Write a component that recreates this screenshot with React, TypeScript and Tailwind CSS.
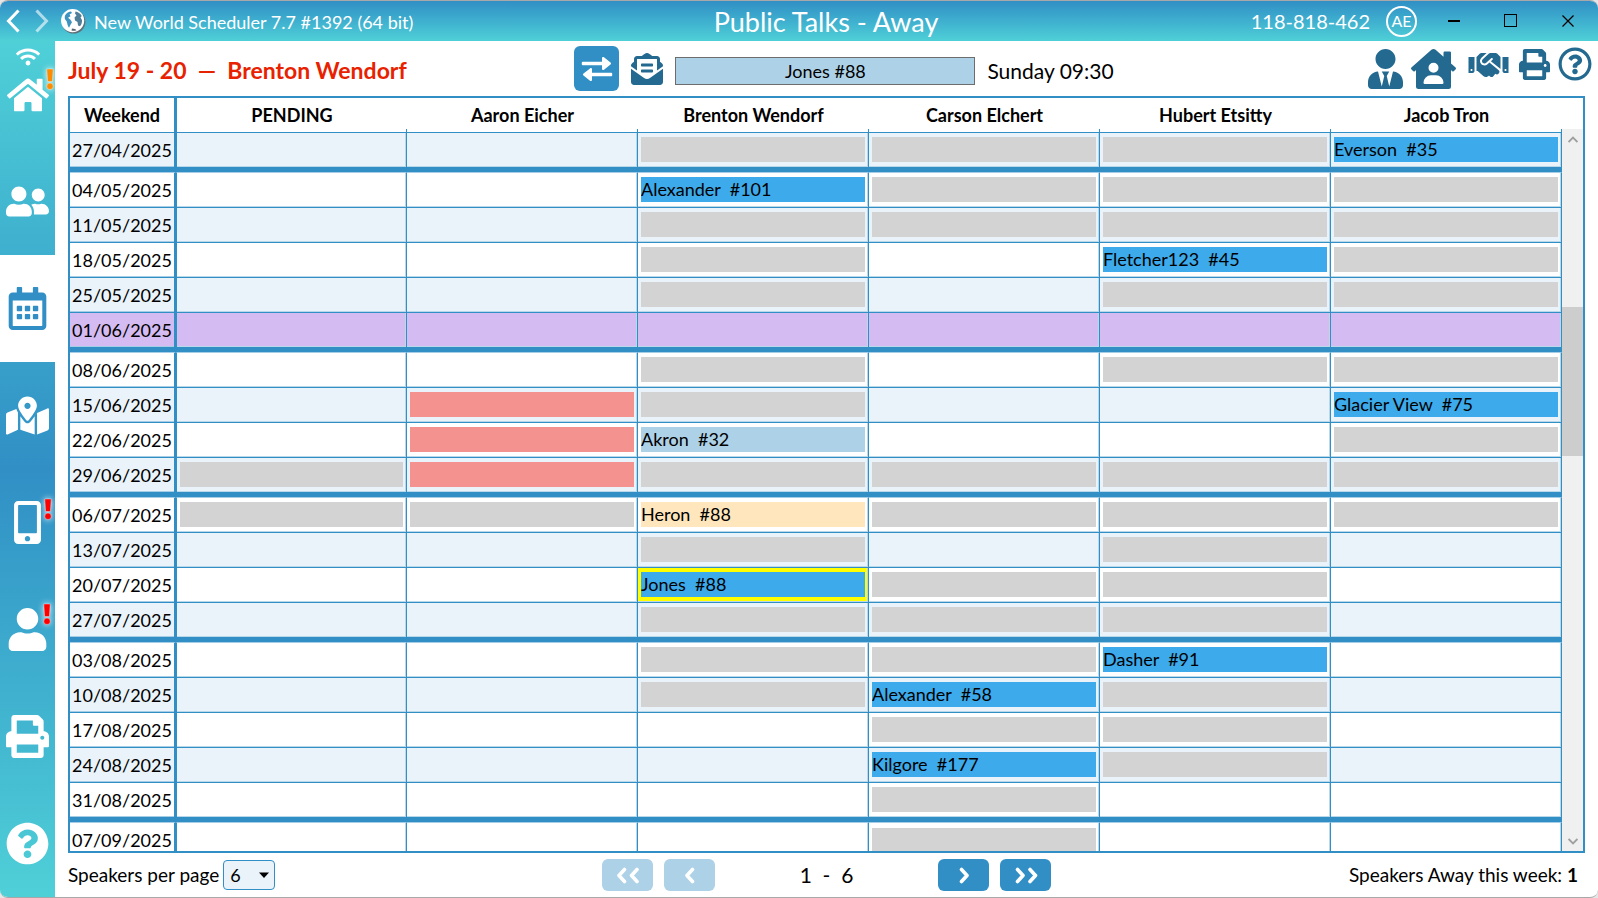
import { useState, type ReactNode } from "react";
import {
  FaEnvelopeOpenText,
  FaHandshake,
  FaHome,
  FaHouseUser,
  FaMapMarkedAlt,
  FaMobileAlt,
  FaPrint,
  FaQuestionCircle,
  FaRegCalendarAlt,
  FaRegQuestionCircle,
  FaUser,
  FaUserFriends,
  FaUserTie,
  FaWifi,
} from "react-icons/fa";

type Tone = "blocked" | "away" | "booked" | "light" | "tentative";
type Slot = null | { tone: Tone; label?: string; selected?: boolean };
type Week = { date: string; slots: Slot[]; special?: boolean };

const tones: Record<Tone, string> = {
  blocked: "bg-[#d3d3d3]",
  away: "bg-[#f3928f]",
  booked: "bg-[#3daaeb]",
  light: "bg-[#add1e7]",
  tentative: "bg-[#ffe6bd]",
};

const _ = null;
const g: Slot = { tone: "blocked" };
const r: Slot = { tone: "away" };
const talk = (label: string, tone: Tone = "booked", selected = false): Slot => ({ tone, label, selected });

const speakers = ["PENDING", "Aaron Eicher", "Brenton Wendorf", "Carson Elchert", "Hubert Etsitty", "Jacob Tron"];

/* Weeks grouped by month; `shade` tells whether the first week of the group is tinted. */
const months: { shade: boolean; weeks: Week[] }[] = [
  { shade: true, weeks: [{ date: "27/04/2025", slots: [_, _, g, g, g, talk("Everson  #35")] }] },
  {
    shade: false,
    weeks: [
      { date: "04/05/2025", slots: [_, _, talk("Alexander  #101"), g, g, g] },
      { date: "11/05/2025", slots: [_, _, g, g, g, g] },
      { date: "18/05/2025", slots: [_, _, g, _, talk("Fletcher123  #45"), g] },
      { date: "25/05/2025", slots: [_, _, g, _, g, g] },
      { date: "01/06/2025", slots: [_, _, _, _, _, _], special: true },
    ],
  },
  {
    shade: false,
    weeks: [
      { date: "08/06/2025", slots: [_, _, g, _, g, g] },
      { date: "15/06/2025", slots: [_, r, g, _, _, talk("Glacier View  #75")] },
      { date: "22/06/2025", slots: [_, r, talk("Akron  #32", "light"), _, _, g] },
      { date: "29/06/2025", slots: [g, r, g, g, g, g] },
    ],
  },
  {
    shade: false,
    weeks: [
      { date: "06/07/2025", slots: [g, g, talk("Heron  #88", "tentative"), g, g, g] },
      { date: "13/07/2025", slots: [_, _, g, _, g, _] },
      { date: "20/07/2025", slots: [_, _, talk("Jones  #88", "booked", true), g, g, _] },
      { date: "27/07/2025", slots: [_, _, g, g, g, _] },
    ],
  },
  {
    shade: false,
    weeks: [
      { date: "03/08/2025", slots: [_, _, g, g, talk("Dasher  #91"), _] },
      { date: "10/08/2025", slots: [_, _, g, talk("Alexander  #58"), g, _] },
      { date: "17/08/2025", slots: [_, _, _, g, g, _] },
      { date: "24/08/2025", slots: [_, _, _, talk("Kilgore  #177"), g, _] },
      { date: "31/08/2025", slots: [_, _, _, g, _, _] },
    ],
  },
  { shade: false, weeks: [{ date: "07/09/2025", slots: [_, _, _, g, _, _] }] },
];

function Globe() {
  return (
    <svg viewBox="0 0 26 26" className="size-[26px]" aria-hidden="true">
      <circle cx="13.6" cy="13.8" r="11.8" fill="#5f6f78" />
      <circle cx="12.6" cy="12.6" r="11.6" fill="#fff" />
      <path d="M5 7.500c1.500-2.500 4-4 6-4l1 1.500-2.500 1.500 1 1.800-2.500 1.500 2.500 2 1.500 2.500-1.500 2.500-1.500 3C7.500 18 7.500 15.500 6.500 13 4.500 11.500 4.500 9.500 5 7.500z" fill="#3f93bf" />
      <path d="M15.500 3.500c2.500.2 5 2 6.300 4.500l-1.300 1.500 1.500 2.500c.2 2.500-.5 4.500-2 6.300l-2-.8-.5-3.500-2.500-1.500-.5-3 2-2-1.500-2z" fill="#4f7f99" />
      <path d="M12 20.500l3 .5 1.500 1.200c-1.500.6-3.500.7-5 .3z" fill="#56656e" />
    </svg>
  );
}

function Chevrons({ dir, count }: { dir: "left" | "right"; count: 1 | 2 }) {
  const w = count === 2 ? 24 : 12;
  const one = dir === "left" ? "M8.500 2.500 3 8.500l5.500 6" : "M3.500 2.500 9 8.500l-5.500 6";
  return (
    <svg viewBox={`0 0 ${w} 17`} width={w} height={17} fill="none" stroke="currentColor" strokeWidth="3.600" strokeLinecap="round" strokeLinejoin="round" aria-hidden="true">
      <path d={one} />
      {count === 2 && <path d={one} transform="translate(12.500 0)" />}
    </svg>
  );
}

function Alert({ className }: { className: string }) {
  return (
    <svg
      viewBox="0 0 20 32"
      className={`absolute h-8 w-5 drop-shadow-[0_0_3px_#ffffff] ${className}`}
      role="img"
      aria-label="Attention"
    >
      <path d="M6.800 6h6.400l-.8 12.500H7.600z" fill="currentColor" stroke="#fff" strokeOpacity=".35" />
      <circle cx="10" cy="23.300" r="3.200" fill="currentColor" stroke="#fff" strokeOpacity=".35" />
    </svg>
  );
}

function NavItem({ label, active, children }: { label: string; active?: boolean; children: ReactNode }) {
  return (
    <button
      type="button"
      aria-label={label}
      aria-current={active ? "page" : undefined}
      className={`relative flex w-full flex-1 items-center justify-center ${active ? "bg-white text-[#318fc5]" : "text-white"}`}
    >
      {children}
    </button>
  );
}

function TitleBar() {
  return (
    <header className="grid h-10 shrink-0 grid-cols-[1fr_auto_1fr] items-center bg-linear-to-b from-[#318fc5] to-[#4fd0d7] text-white">
      <div className="flex items-center">
        <button type="button" aria-label="Back" className="ml-1 flex w-7 justify-start">
          <svg viewBox="0 0 18 24" className="h-6 w-[18px]" fill="none" stroke="currentColor" strokeWidth="3"><path d="M14.500 1.500 4.500 12l10 10.500" /></svg>
        </button>
        <button type="button" aria-label="Forward" className="flex w-7 justify-start opacity-60">
          <svg viewBox="0 0 18 24" className="h-6 w-[18px]" fill="none" stroke="currentColor" strokeWidth="3"><path d="M4.500 1.500l10 10.500-10 10.500" /></svg>
        </button>
        <Globe />
        <span className="pt-0.5 pl-2 text-[18px] whitespace-nowrap">New World Scheduler 7.7 #1392 (64 bit)</span>
      </div>
      <h1 className="pt-0.5 pl-[54px] text-[27px] leading-[38px] whitespace-nowrap">Public Talks - Away</h1>
      <div className="flex items-center justify-end pr-0.5">
        <span className="text-[20px]">118-818-462</span>
        <span className="ml-4 flex size-[31px] items-center justify-center rounded-full border-2 border-white text-[16px] leading-none">AE</span>
        <div className="ml-2 flex text-black">
          <button type="button" aria-label="Minimize" className="flex h-10 w-[57px] items-center justify-center">
            <svg viewBox="0 0 14 14" className="size-3.5"><path d="M1 7h12" stroke="currentColor" strokeWidth="2" /></svg>
          </button>
          <button type="button" aria-label="Maximize" className="flex h-10 w-[57px] items-center justify-center">
            <svg viewBox="0 0 14 14" className="size-3.5"><rect x=".5" y=".5" width="12" height="12" fill="none" stroke="currentColor" /></svg>
          </button>
          <button type="button" aria-label="Close" className="flex h-10 w-[57px] items-center justify-center">
            <svg viewBox="0 0 14 14" className="size-3.5"><path d="M1.500 1.500l11 11m0-11l-11 11" stroke="currentColor" strokeWidth="1.200" /></svg>
          </button>
        </div>
      </div>
    </header>
  );
}

function Sidebar() {
  return (
    <nav aria-label="Main" className="flex w-[55px] shrink-0 flex-col bg-linear-to-b from-[#4fd0d7] via-[#318fc5] to-[#4fd0d7]">
      <NavItem label="Home">
        <FaWifi className="absolute top-1 left-4 size-6" />
        <FaHome className="size-[42px]" />
        <Alert className="top-[22px] left-10 text-[#ff8c00]" />
      </NavItem>
      <NavItem label="Persons"><FaUserFriends className="size-[43px]" /></NavItem>
      <NavItem label="Schedules" active><FaRegCalendarAlt className="size-[43px]" /></NavItem>
      <NavItem label="Territories"><FaMapMarkedAlt className="size-[43px]" /></NavItem>
      <NavItem label="Mobile">
        <FaMobileAlt className="size-[43px]" />
        <Alert className="top-6 left-[38px] text-[#f00]" />
      </NavItem>
      <NavItem label="Account">
        <FaUser className="size-[43px]" />
        <Alert className="top-[22px] left-[37px] text-[#f00]" />
      </NavItem>
      <NavItem label="Print"><FaPrint className="size-[43px]" /></NavItem>
      <NavItem label="Help"><FaQuestionCircle className="size-[43px]" /></NavItem>
    </nav>
  );
}

function Toolbar() {
  return (
    <div className="flex h-[55px] shrink-0 items-center">
      <h2 className="flex-1 basis-0 pt-1 pl-[13px] text-[23px] font-bold whitespace-pre text-[#e82200]">July 19 - 20  —  Brenton Wendorf</h2>
      <div className="ml-7 flex items-center">
        <button type="button" aria-label="Swap" className="flex size-[45px] items-center justify-center rounded-md bg-[#318fc5] text-white">
          <svg viewBox="0 0 32 26" className="h-[26px] w-8" fill="currentColor">
            <path d="M1.500 5.700H21V2.300c0-1.200 1.200-1.700 2-1l6.500 5.200c.7.600.7 1.500 0 2L23 13.700c-.8.700-2 .2-2-1V9.200H1.500C.5 9.200.5 5.700 1.500 5.700z" />
            <path d="M30.500 16.800H11v-3.400c0-1.200-1.200-1.700-2-1l-6.500 5.200c-.7.600-.7 1.500 0 2L9 24.800c.8.700 2 .2 2-1v-3.500h19.500c1 0 1-3.500 0-3.500z" />
          </svg>
        </button>
        <button type="button" aria-label="Send mail" className="ml-3 text-[#236990]"><FaEnvelopeOpenText className="size-8" /></button>
        <button type="button" className="mt-1 ml-3 h-7 w-[300px] border border-[#6d6d6d] bg-[#add1e7] text-[18px] leading-6 text-black">Jones #88</button>
        <span className="mt-1 ml-3 text-[21px] whitespace-nowrap">Sunday 09:30</span>
      </div>
      <div className="flex flex-1 basis-0 items-start justify-end gap-2 self-stretch pt-1.5 pr-1.5 text-[#236990]">
        <button type="button" aria-label="Speaker"><FaUserTie className="mt-0.5 h-10 w-[35px]" /></button>
        <button type="button" aria-label="Congregations"><FaHouseUser className="mt-0.5 mr-1 h-10 w-[45px]" /></button>
        <button type="button" aria-label="Arrangements"><FaHandshake className="mt-0.5 mr-0.5 h-8 w-[41px]" /></button>
        <button type="button" aria-label="Print"><FaPrint className="mt-0.5 size-[31px]" /></button>
        <button type="button" aria-label="Help"><FaRegQuestionCircle className="size-[34px]" /></button>
      </div>
    </div>
  );
}

function Schedule() {
  const line = "border-[#318fc5]";
  return (
    <div className="mx-[13px] flex min-h-0 flex-1 overflow-hidden border-2 border-[#318fc5]">
      <div className="min-w-0 flex-1 overflow-hidden">
        <table className="w-full table-fixed border-separate border-spacing-0 text-[18px] leading-[25px]">
          <thead>
            <tr className="h-[35px]">
              <th scope="col" className={`w-[106px] border-r-2 border-b ${line} p-0 font-bold`}>Weekend</th>
              {speakers.map((name, i) => (
                <th
                  key={name}
                  scope="col"
                  className={`relative border-b ${line} p-0 font-bold after:absolute after:right-0 after:bottom-0 after:h-[3px] after:w-px after:bg-[#318fc5] ${i === 0 ? "border-l" : ""}`}
                >
                  {name}
                </th>
              ))}
            </tr>
          </thead>
          {months.map((month, m) => (
            <tbody key={month.weeks[0].date}>
              {month.weeks.map((week, w) => {
                const tinted = (w % 2 === 1) !== month.shade;
                const bg = week.special ? "bg-[#d4bbf1]" : tinted ? "bg-[#eaf3f9]" : "bg-white";
                const last = w === month.weeks.length - 1;
                const first = w === 0 && m > 0;
                const height = last && first ? "h-[41px]" : last ? "h-[39px]" : first ? "h-9" : "h-[35px]";
                const bottom = last ? "border-b-[5px]" : "border-b";
                const top = first ? "border-t border-t-[#a5cee6]" : "";
                const edge = `${bottom} ${top} border-b-[#318fc5] border-r-[#318fc5] border-l-[#318fc5]`;
                return (
                  <tr key={week.date} className={`${height} ${bg}`}>
                    <th scope="row" className={`border-r-2 p-0 text-center font-normal shadow-[inset_0_-1px_0_#a5cee6] ${edge}`}>{week.date}</th>
                    {week.slots.map((slot, i) => (
                      <td
                        key={speakers[i]}
                        className={`border-r px-[3px] pt-1 pb-[5px] shadow-[inset_-1px_-1px_0_#b9d9eb] ${edge} ${i === 0 ? "border-l" : ""} ${slot?.selected ? "bg-[#ff0]" : ""}`}
                      >
                        {slot && <div className={`h-[25px] overflow-hidden whitespace-pre ${tones[slot.tone]}`}>{slot.label}</div>}
                      </td>
                    ))}
                  </tr>
                );
              })}
            </tbody>
          ))}
        </table>
      </div>
      <div className="flex w-[21px] shrink-0 flex-col pt-[31px]">
        <div className="flex min-h-0 flex-1 flex-col bg-[#f0f0f0] text-[#a0a0a0]">
          <button type="button" aria-label="Scroll up" className="flex h-5 items-center justify-center">
            <svg viewBox="0 0 10 7" className="h-[7px] w-2.5" fill="none" stroke="currentColor" strokeWidth="1.800"><path d="M.6 6 5 1.600 9.400 6" /></svg>
          </button>
          <div className="flex min-h-0 flex-1 flex-col">
            <div className="grow-158" />
            <div className="grow-149 bg-[#cdcdcd]" />
            <div className="grow-375" />
          </div>
          <button type="button" aria-label="Scroll down" className="flex h-5 items-center justify-center">
            <svg viewBox="0 0 10 7" className="h-[7px] w-2.5" fill="none" stroke="currentColor" strokeWidth="1.800"><path d="M.6 1 5 5.400 9.400 1" /></svg>
          </button>
        </div>
      </div>
    </div>
  );
}

function Footer() {
  const [perPage, setPerPage] = useState("6");
  const pager = "flex h-8 w-[51px] items-center justify-center rounded-md text-white";
  return (
    <footer className="grid h-11 shrink-0 grid-cols-[1fr_auto_1fr] items-center pr-5 pl-[13px] text-[19px]">
      <div className="flex items-center gap-1">
        <label htmlFor="per-page" className="whitespace-nowrap">Speakers per page</label>
        <div className="relative flex">
          <select
            id="per-page"
            value={perPage}
            onChange={(e) => setPerPage(e.target.value)}
            className="h-[30px] w-[52px] appearance-none rounded border border-[#318fc5] bg-[#eaf3f9] pl-1.5 text-[18px] text-black"
          >
            <option>4</option>
            <option>6</option>
            <option>8</option>
          </select>
          <svg viewBox="0 0 10 6" className="pointer-events-none absolute top-3 right-1.5 h-1.5 w-2.5"><path d="M0 .5h10L5 6z" fill="#000" /></svg>
        </div>
      </div>
      <div className="ml-[7px] flex items-center gap-[11px]">
        <button type="button" aria-label="First page" disabled className={`${pager} bg-[#add1e7]`}><Chevrons dir="left" count={2} /></button>
        <button type="button" aria-label="Previous page" disabled className={`${pager} bg-[#add1e7]`}><Chevrons dir="left" count={1} /></button>
        <span className="w-[201px] text-center text-[21px] leading-8 whitespace-pre">1  -  6</span>
        <button type="button" aria-label="Next page" className={`${pager} bg-[#318fc5]`}><Chevrons dir="right" count={1} /></button>
        <button type="button" aria-label="Last page" className={`${pager} bg-[#318fc5]`}><Chevrons dir="right" count={2} /></button>
      </div>
      <p className="text-right whitespace-nowrap">Speakers Away this week: <b>1</b></p>
    </footer>
  );
}

export default function App() {
  return (
    <div className="h-screen bg-[#e6e6e6] font-[Lato,Carlito,sans-serif] text-black">
      <div className="flex h-full flex-col overflow-hidden rounded-lg border-y border-[#a8a8a8] bg-white">
        <TitleBar />
        <div className="flex min-h-0 flex-1">
          <Sidebar />
          <main className="flex min-w-0 flex-1 flex-col">
            <Toolbar />
            <Schedule />
            <Footer />
          </main>
        </div>
      </div>
    </div>
  );
}
